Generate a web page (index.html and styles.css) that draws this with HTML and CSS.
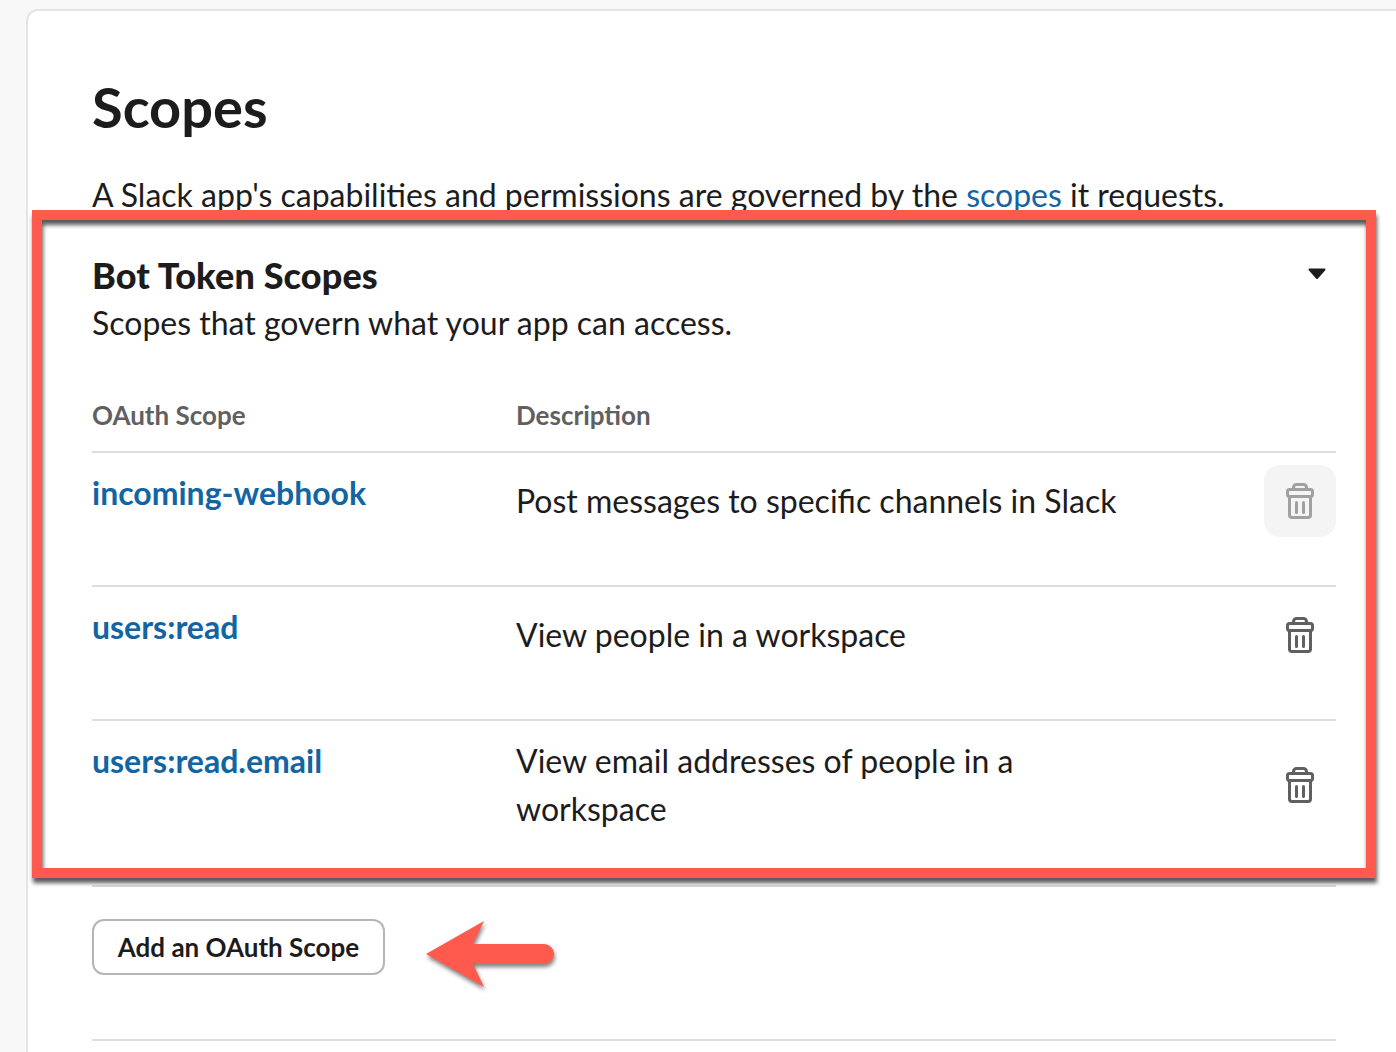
FILE: index.html
```html
<!DOCTYPE html>
<html lang="en">
<head>
  <meta charset="UTF-8">
  <meta name="viewport" content="width=device-width, initial-scale=1.0">
  <title>Scopes</title>
  <link rel="stylesheet" href="styles.css">
</head>
<body>
  <svg class="icon-defs" width="0" height="0">
    <symbol id="trash" viewBox="0 0 28 36">
      <path d="M7.5 6.5V4.5a3 3 0 0 1 3-3h7a3 3 0 0 1 3 3v2" fill="none" stroke="currentColor" stroke-width="3"/>
      <rect x="1.5" y="6.5" width="25" height="7" rx="2" fill="none" stroke="currentColor" stroke-width="3"/>
      <path d="M3.5 13.5V32a2.5 2.5 0 0 0 2.5 2.5h16a2.5 2.5 0 0 0 2.5-2.5V13.5" fill="none" stroke="currentColor" stroke-width="3"/>
      <path d="M10.5 19.5v10M17.5 19.5v10" fill="none" stroke="currentColor" stroke-width="3" stroke-linecap="round"/>
    </symbol>
  </svg>

  <main class="card">
    <h1 class="title">Scopes</h1>
    <p class="intro">A Slack app's capabilities and permissions are governed by the <a href="#">scopes</a> it requests.</p>

    <section class="scopes">
      <div class="scopes-head">
        <div>
          <h2>Bot Token Scopes</h2>
          <p>Scopes that govern what your app can access.</p>
        </div>
        <svg class="caret" width="18" height="12" viewBox="0 0 18 12">
          <path d="M1.5 1.5h15L9 10z" fill="#1d1c1d" stroke="#1d1c1d" stroke-width="2" stroke-linejoin="round"/>
        </svg>
      </div>

      <div class="table-head">
        <span>OAuth Scope</span>
        <span>Description</span>
      </div>

      <div class="row">
        <a class="scope-name" href="#">incoming-webhook</a>
        <div class="scope-desc">Post messages to specific channels in Slack</div>
        <button class="delete is-hover"><svg width="28" height="36"><use href="#trash"/></svg></button>
      </div>
      <div class="row">
        <a class="scope-name" href="#">users:read</a>
        <div class="scope-desc">View people in a workspace</div>
        <button class="delete"><svg width="28" height="36"><use href="#trash"/></svg></button>
      </div>
      <div class="row">
        <a class="scope-name" href="#">users:read.email</a>
        <div class="scope-desc">View email addresses of people in a workspace</div>
        <button class="delete"><svg width="28" height="36"><use href="#trash"/></svg></button>
      </div>
    </section>

    <div class="add-row">
      <button class="add-btn">Add an OAuth Scope</button>
    </div>
  </main>

  <!-- annotations on top of the screenshot -->
  <div class="highlight"></div>
  <svg class="arrow" width="136" height="76" viewBox="0 0 136 76">
    <path d="M2 34 60 1 49 24H120a10 10 0 0 1 0 20H49L60 67z" fill="#ff5a4d"/>
  </svg>
</body>
</html>
```

FILE: styles.css
```css
:root {
  --text: #1d1c1d;
  --muted: #616061;
  --link: #1264a3;
  --line: #dddddd;
  --red: #ff5a4d;
}
html, body {
  height: 100%;
}
body {
  margin: 0;
  background: #f8f8f8;
  color: var(--text);
  font-family: Lato, 'Noto Sans', sans-serif;
  overflow: hidden;
  position: relative;
}
.icon-defs {
  position: absolute;
}
.card {
  margin: 9px 0 0 26px;
  padding: 0 60px 0 64px;
  height: calc(100vh - 9px);
  box-sizing: border-box;
  background: #fff;
  border: 2px solid #e4e4e4;
  border-width: 2px 0 0 2px;
  border-top-left-radius: 12px;
}
.title {
  margin: 0;
  padding-top: 60px;
  font-size: 56px;
  line-height: 72px;
  font-weight: 700;
}
.intro {
  margin: 0;
  padding-top: 28px;
  font-size: 32px;
  line-height: 48px;
}
.intro a {
  color: var(--link);
  text-decoration: none;
}
.scopes {
  margin-top: 32px;
}
.scopes-head {
  display: flex;
  justify-content: space-between;
  align-items: flex-start;
}
.scopes-head h2 {
  margin: 0;
  font-size: 36px;
  line-height: 48px;
  font-weight: 900;
  letter-spacing: 0.13px;
}
.scopes-head p {
  margin: 0;
  font-size: 32px;
  line-height: 48px;
}
.caret {
  margin: 17px 10px 0 0;
}
.table-head {
  display: grid;
  grid-template-columns: 424px 1fr;
  padding: 50px 0 18px;
  font-size: 26px;
  line-height: 36px;
  font-weight: 700;
  color: var(--muted);
  border-bottom: 2px solid var(--line);
}
.row {
  display: grid;
  grid-template-columns: 424px 1fr 72px;
  align-items: center;
  min-height: 134px;
  box-sizing: border-box;
  padding: 11px 0 47px;
  border-bottom: 2px solid var(--line);
}
.scope-name {
  align-self: start;
  padding-top: 5px;
  font-size: 32px;
  line-height: 48px;
  font-weight: 700;
  color: var(--link);
  text-decoration: none;
}
.scope-desc {
  padding: 5px 128px 5px 0;
  font-size: 32px;
  line-height: 48px;
}
.delete {
  display: flex;
  align-items: center;
  justify-content: center;
  width: 72px;
  height: 72px;
  padding: 0;
  border: none;
  border-radius: 16px;
  background: transparent;
  color: #616061;
}
.delete.is-hover {
  background: #f4f4f4;
  color: #a0a0a0;
}
.add-row {
  padding: 32px 0 64px;
  border-bottom: 2px solid var(--line);
}
.add-btn {
  width: 293px;
  height: 56px;
  padding: 0;
  border: 2px solid #b5b5b5;
  border-radius: 12px;
  background: #fff;
  color: var(--text);
  font-family: inherit;
  font-size: 26px;
  font-weight: 700;
}
.highlight {
  position: absolute;
  left: 32px;
  top: 210px;
  width: 1344px;
  height: 668px;
  box-sizing: border-box;
  border: 10px solid var(--red);
  filter: drop-shadow(1px 5px 2px rgba(0, 0, 0, 0.65));
}
.arrow {
  position: absolute;
  left: 424px;
  top: 920px;
  overflow: visible;
  filter: drop-shadow(1px 3px 2px rgba(0, 0, 0, 0.5));
}
```
